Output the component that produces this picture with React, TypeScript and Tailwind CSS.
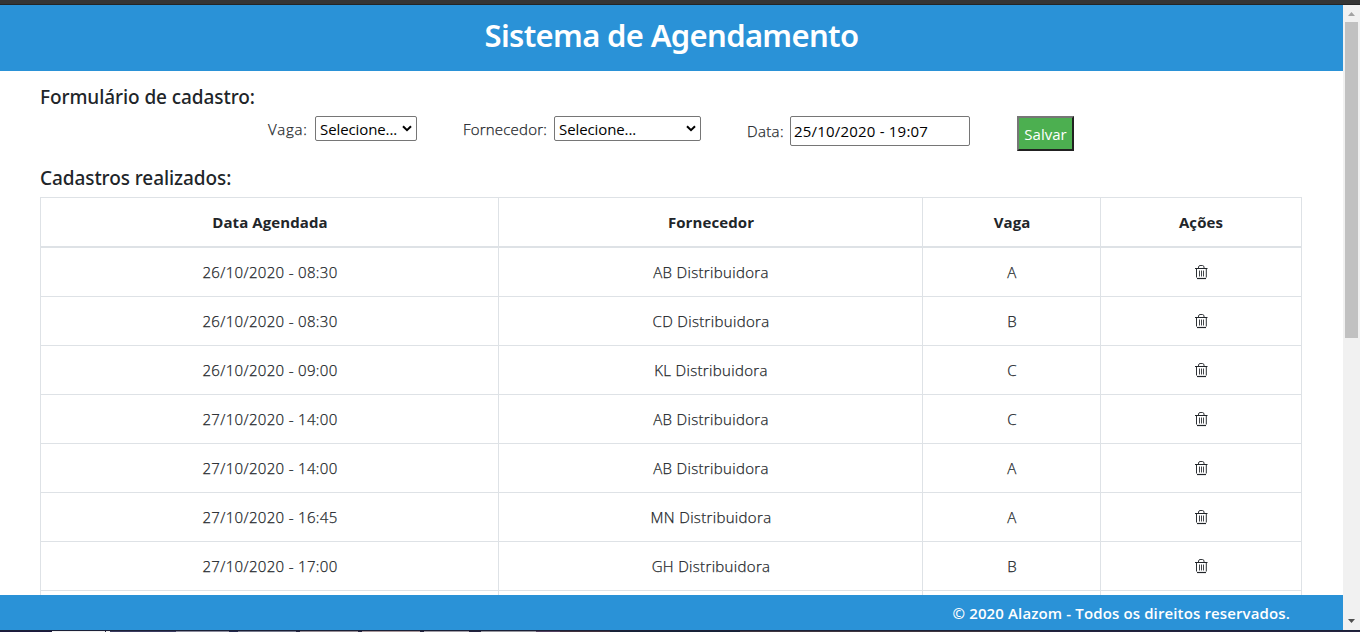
const rows = [
  { date: '26/10/2020 - 08:30', supplier: 'AB Distribuidora', slot: 'A' },
  { date: '26/10/2020 - 08:30', supplier: 'CD Distribuidora', slot: 'B' },
  { date: '26/10/2020 - 09:00', supplier: 'KL Distribuidora', slot: 'C' },
  { date: '27/10/2020 - 14:00', supplier: 'AB Distribuidora', slot: 'C' },
  { date: '27/10/2020 - 14:00', supplier: 'AB Distribuidora', slot: 'A' },
  { date: '27/10/2020 - 16:45', supplier: 'MN Distribuidora', slot: 'A' },
  { date: '27/10/2020 - 17:00', supplier: 'GH Distribuidora', slot: 'B' },
  { date: '', supplier: '', slot: '' },
];

function Trash() {
  return (
    <svg width="14" height="16" viewBox="0 0 14 16" fill="none" stroke="#212529" className="mx-auto block">
      <path d="M1 4.5h12.500" />
      <path d="M4.5 4V3Q4.800 1.600 6 1.500h2.500q1.300 0 1.500 1.500V4" strokeOpacity="0.9" />
      <path d="M2.5 4.5v9M12.300 4.500v9" strokeOpacity="0.95" />
      <path d="M3 14.5h9" strokeWidth="1.2" />
      <path d="M5.500 6.500v6M7.500 6.500v6M9.500 6.500v6" strokeOpacity="0.85" />
    </svg>
  );
}

function Chevron() {
  return (
    <svg width="10" height="7" viewBox="0 0 10 7" fill="none" stroke="#000" strokeWidth="2">
      <path d="M1 1.2l4 4 4-4" />
    </svg>
  );
}

export default function App() {
  return (
    <div className="flex h-[632px] w-[1360px] flex-col overflow-hidden bg-white font-['Open_Sans','Noto_Sans',sans-serif] text-[#212529]">
      <div className="h-[5px] shrink-0 border-b border-[#252525] bg-[#353535]" />
      <div className="flex h-[625px] shrink-0">
        <div className="flex w-[1343px] flex-col">
          <header className="flex h-[66px] shrink-0 justify-center bg-[#2a92d7] pt-[10px]">
            <h1 className="font-['Noto_Sans','Open_Sans',sans-serif] text-[31px] leading-[40px] font-semibold tracking-[-0.66px] text-white">Sistema de Agendamento</h1>
          </header>
          <main className="h-[524px] shrink-0 overflow-hidden px-[40px] pt-[14px]">
            <h2 className="font-['Noto_Sans','Open_Sans',sans-serif] text-[19px] leading-[24px] font-medium tracking-[-0.08px]">Formulário de cadastro:</h2>
            <form className="mt-[7px] flex h-[35px] items-start pl-[228px] text-[15px] leading-[24px] font-light">
              <label className="mt-px w-[47px] tracking-[0.7px] whitespace-nowrap [-webkit-text-stroke:0.25px_#212529]">Vaga:</label>
              <div className="flex h-[25px] w-[102px] items-center justify-between rounded-[2px] border border-[#767676] bg-white pr-[4px] pl-[4px] font-normal tracking-[-0.1px] text-black">
                <span>Selecione...</span>
                <Chevron />
              </div>
              <label className="mt-px ml-[46px] w-[91px] tracking-[0.2px] whitespace-nowrap [-webkit-text-stroke:0.25px_#212529]">Fornecedor:</label>
              <div className="flex h-[25px] w-[147px] items-center justify-between rounded-[2px] border border-[#767676] bg-white pr-[4px] pl-[4px] font-normal tracking-[-0.1px] text-black">
                <span>Selecione...</span>
                <Chevron />
              </div>
              <label className="mt-[3px] ml-[46px] w-[43px] tracking-[0.35px] whitespace-nowrap [-webkit-text-stroke:0.25px_#212529]">Data:</label>
              <div className="flex h-[30px] w-[180px] items-center rounded-[2px] border border-[#767676] bg-white pl-[3px] font-normal tracking-[0.2px] text-black">
                <span>25/10/2020 - 19:07</span>
              </div>
              <button type="button" className="ml-[47px] flex h-[35px] w-[57px] items-center justify-center border-2 border-t-[#767676] border-r-[#212121] border-b-[#212121] border-l-[#767676] bg-[#4caf50] font-normal text-white">
                Salvar
              </button>
            </form>
            <h2 className="mt-[15px] font-['Noto_Sans','Open_Sans',sans-serif] text-[19px] leading-[24px] font-medium tracking-[-0.08px]">Cadastros realizados:</h2>
            <table className="mt-[7px] w-[1262px] table-fixed border-separate border-spacing-0 border-t border-l border-[#dee2e6] text-center text-[15px] leading-[24px]">
              <thead>
                <tr className="h-[50px] font-bold tracking-[0.1px]">
                  <th className="w-[458px] border-r border-b-2 border-[#dee2e6] pl-px">Data Agendada</th>
                  <th className="w-[424px] border-r border-b-2 border-[#dee2e6] pl-px">Fornecedor</th>
                  <th className="w-[178px] border-r border-b-2 border-[#dee2e6] pl-px">Vaga</th>
                  <th className="w-[201px] border-r border-b-2 border-[#dee2e6]">Ações</th>
                </tr>
              </thead>
              <tbody className="font-light tracking-[0.33px] [-webkit-text-stroke:0.25px_#212529]">
                {rows.map((row, i) => (
                  <tr key={i} className="h-[49px]">
                    <td className="border-r border-b border-[#dee2e6] pl-px">{row.date}</td>
                    <td className="border-r border-b border-[#dee2e6] pl-px">{row.supplier}</td>
                    <td className="border-r border-b border-[#dee2e6] pl-px">{row.slot}</td>
                    <td className="border-r border-b border-[#dee2e6]">{row.date && <Trash />}</td>
                  </tr>
                ))}
              </tbody>
            </table>
          </main>
          <footer className="flex h-[35px] shrink-0 justify-end bg-[#2a92d7] pt-[6px] pr-[53px] text-[15px] leading-[24px] font-semibold tracking-[0.13px] text-white">
            © 2020 Alazom - Todos os direitos reservados.
          </footer>
        </div>
        <div className="flex w-[17px] flex-col items-center bg-[#f1f1f1]">
          <svg width="17" height="17" viewBox="0 0 17 17" className="shrink-0">
            <path d="M5 11h7L8.500 7z" fill="#a3a3a3" />
          </svg>
          <div className="h-[316px] w-[13px] bg-[#c1c1c1]" />
          <svg width="17" height="17" viewBox="0 0 17 17" className="mt-auto shrink-0">
            <path d="M5 6h7L8.500 10z" fill="#505050" />
          </svg>
        </div>
      </div>
      <div className="flex h-[2px] shrink-0 flex-col">
        <div className="h-px bg-[#1b2138]" />
        <div className="flex h-px bg-[#24233f]">
          <div className="w-[52px] bg-[#1c1a3e]" />
          <div className="w-[53px] bg-[#f0f0f0]" />
          <div className="w-px" />
          <div className="w-[4px] bg-[#f0f0f0]" />
          <div className="w-[66px] bg-[#3b3c60]" />
          <div className="w-[53px] bg-[#8a8b9c]" />
          <div className="w-[9px] bg-[#24284e]" />
          <div className="w-[58px] bg-[#76798c]" />
          <div className="w-[4px]" />
          <div className="w-[58px] bg-[#958c94]" />
          <div className="w-[4px]" />
          <div className="w-[58px] bg-[#a7979a]" />
          <div className="w-[4px]" />
          <div className="w-[45px] bg-[#a09ca5]" />
          <div className="w-[12px]" />
          <div className="w-[55px] bg-[#95959d]" />
          <div className="w-[24px] bg-[#53405f]" />
          <div className="w-[50px] bg-[#41313d]" />
          <div className="w-[130px] bg-[#172238]" />
          <div className="w-[300px] bg-[#3f3640]" />
        </div>
      </div>
    </div>
  );
}
